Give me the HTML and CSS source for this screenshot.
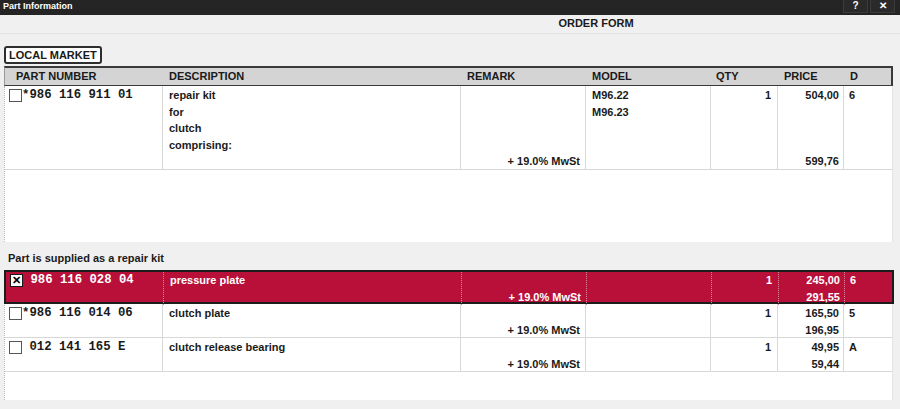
FILE: index.html
```html
<!DOCTYPE html>
<html lang="en">
<head>
    <meta charset="UTF-8">
    <meta name="viewport" content="width=device-width, initial-scale=1.0">
    <title>Part Information</title>
    <link rel="stylesheet" href="styles.css">
</head>
<body>
    <div class="titlebar">
        <span class="title">Part Information</span>
        <div class="tb-buttons">
            <span class="tb-btn">?</span>
            <span class="tb-btn">&#x2715;</span>
        </div>
    </div>

    <div class="form-head">ORDER FORM</div>

    <section class="content">
        <div class="tab">LOCAL MARKET</div>

        <div class="grid-head">
            <div class="hcell first">PART NUMBER</div>
            <div class="hcell">DESCRIPTION</div>
            <div class="hcell">REMARK</div>
            <div class="hcell">MODEL</div>
            <div class="hcell qty">QTY</div>
            <div class="hcell">PRICE</div>
            <div class="hcell">D</div>
        </div>

        <div class="grid-body main">
            <div class="row tall">
                <div class="cell part"><span class="check"></span><span class="partno">*986 116 911 01</span></div>
                <div class="cell">repair kit<br>for<br>clutch<br>comprising:</div>
                <div class="cell remark"><span>+ 19.0% MwSt</span></div>
                <div class="cell">M96.22<br>M96.23</div>
                <div class="cell qty">1</div>
                <div class="cell price"><span>504,00</span><span>599,76</span></div>
                <div class="cell code">6</div>
            </div>
        </div>

        <p class="section-label">Part is supplied as a repair kit</p>

        <div class="grid-body kit">
            <div class="row selected">
                <div class="cell part"><span class="check checked">&#x2715;</span><span class="partno"> 986 116 028 04</span></div>
                <div class="cell">pressure plate</div>
                <div class="cell remark"><span>+ 19.0% MwSt</span></div>
                <div class="cell"></div>
                <div class="cell qty">1</div>
                <div class="cell price"><span>245,00</span><span>291,55</span></div>
                <div class="cell code">6</div>
            </div>
            <div class="row">
                <div class="cell part"><span class="check"></span><span class="partno">*986 116 014 06</span></div>
                <div class="cell">clutch plate</div>
                <div class="cell remark"><span>+ 19.0% MwSt</span></div>
                <div class="cell"></div>
                <div class="cell qty">1</div>
                <div class="cell price"><span>165,50</span><span>196,95</span></div>
                <div class="cell code">5</div>
            </div>
            <div class="row">
                <div class="cell part"><span class="check"></span><span class="partno"> 012 141 165 E</span></div>
                <div class="cell">clutch release bearing</div>
                <div class="cell remark"><span>+ 19.0% MwSt</span></div>
                <div class="cell"></div>
                <div class="cell qty">1</div>
                <div class="cell price"><span>49,95</span><span>59,44</span></div>
                <div class="cell code">A</div>
            </div>
        </div>
    </section>
</body>
</html>
```

FILE: styles.css
```css
/* General body styling */
body {
    margin: 0;
    padding: 0;
    background-color: #f0f0f0;
    font-family: "Liberation Sans", Arial, sans-serif;
    font-size: 11px;
    font-weight: bold;
    color: #1a1a1a;
}

/* Window title bar */
.titlebar {
    height: 15px;
    background-color: #1c1c1c;
    background-image: radial-gradient(#2e2e2e 0.6px, transparent 0.8px);
    background-size: 2px 2px;
    display: flex;
    justify-content: space-between;
    align-items: flex-start;
    color: #ffffff;
}

.titlebar .title {
    font-size: 9px;
    line-height: 13px;
    padding-left: 3px;
}

.tb-buttons {
    display: flex;
    gap: 2px;
    margin-right: 5px;
}

.tb-btn {
    width: 23px;
    height: 12px;
    background-color: #2a2a2a;
    border: 1px solid #3c3c3c;
    border-top: none;
    text-align: center;
    font-size: 10px;
    line-height: 11px;
}

/* Order form heading */
.form-head {
    height: 18px;
    line-height: 16px;
    padding-left: 292px;
    text-align: center;
    border-bottom: 1px solid #e2e2e2;
}

.content {
    padding: 12px 6px 0 4px;
}

/* Market tab */
.tab {
    display: inline-block;
    height: 14px;
    line-height: 14px;
    padding: 0 3px;
    background-color: #ffffff;
    border: 2px solid #2e2e2e;
    border-radius: 3px;
    margin-bottom: 2px;
}

/* Grid header and rows share the column layout */
.grid-head,
.row {
    display: grid;
    grid-template-columns: 158px 298px 125px 125px 67px 66px 50px;
}

.grid-head {
    width: 889px;
    box-sizing: border-box;
    height: 20px;
    background-color: #d4d4d4;
    border-top: 2px solid #3a3a3a;
    border-bottom: 1px solid #3a3a3a;
    border-right: 2px solid #3a3a3a;
    border-left: 1px solid #9a9a9a;
}

.hcell {
    padding-left: 6px;
    line-height: 17px;
}

.hcell.first {
    padding-left: 11px;
}

.hcell.qty {
    padding-left: 5px;
}

.grid-body {
    width: 889px;
    box-sizing: border-box;
    background-color: #ffffff;
    border-left: 1px dotted #b8b8b8;
    border-right: 1px solid #e4e4e4;
}

.grid-body.main {
    height: 156px;
}

.grid-body.kit {
    height: 130px;
}

.row {
    height: 34px;
    box-sizing: border-box;
    border-bottom: 1px solid #d8d8d8;
}

.row.tall {
    height: 84px;
}

.cell {
    box-sizing: border-box;
    padding: 1px 6px 0;
    line-height: 16.5px;
    border-right: 1px solid #d8d8d8;
}

.cell:last-child {
    border-right: none;
}

/* Part number column */
.cell.part {
    display: flex;
    align-items: flex-start;
    padding-left: 4px;
}

.check {
    width: 13px;
    height: 13px;
    box-sizing: border-box;
    margin-top: 2px;
    background-color: #ffffff;
    border: 1px solid #555555;
    color: #000000;
    font-size: 11px;
    line-height: 11px;
    text-align: center;
}

.check.checked {
    border-color: #1a1a1a;
    font-weight: 900;
}

.partno {
    font-family: "Liberation Mono", "Courier New", monospace;
    font-size: 12.3px;
    white-space: pre;
}

.cell.remark {
    display: flex;
    flex-direction: column;
    justify-content: flex-end;
    align-items: flex-end;
    padding-right: 5px;
}

.cell.qty {
    text-align: right;
    padding-right: 6px;
}

.cell.price {
    display: flex;
    flex-direction: column;
    justify-content: space-between;
    align-items: flex-end;
    padding-right: 4px;
}

.cell.code {
    padding-left: 5px;
}

/* Kit section */
.section-label {
    margin: 0;
    padding: 8px 4px 4px;
    line-height: 16px;
}

.row.selected {
    background-color: #b9103a;
    color: #ffffff;
    border: 2px solid #1c1c1c;
    margin-left: -1px;
    width: 890px;
}

.row.selected .cell {
    padding-top: 0;
    border-right: 1px dotted #d88a9c;
}

.row.selected .cell:last-child {
    border-right: none;
}
```
